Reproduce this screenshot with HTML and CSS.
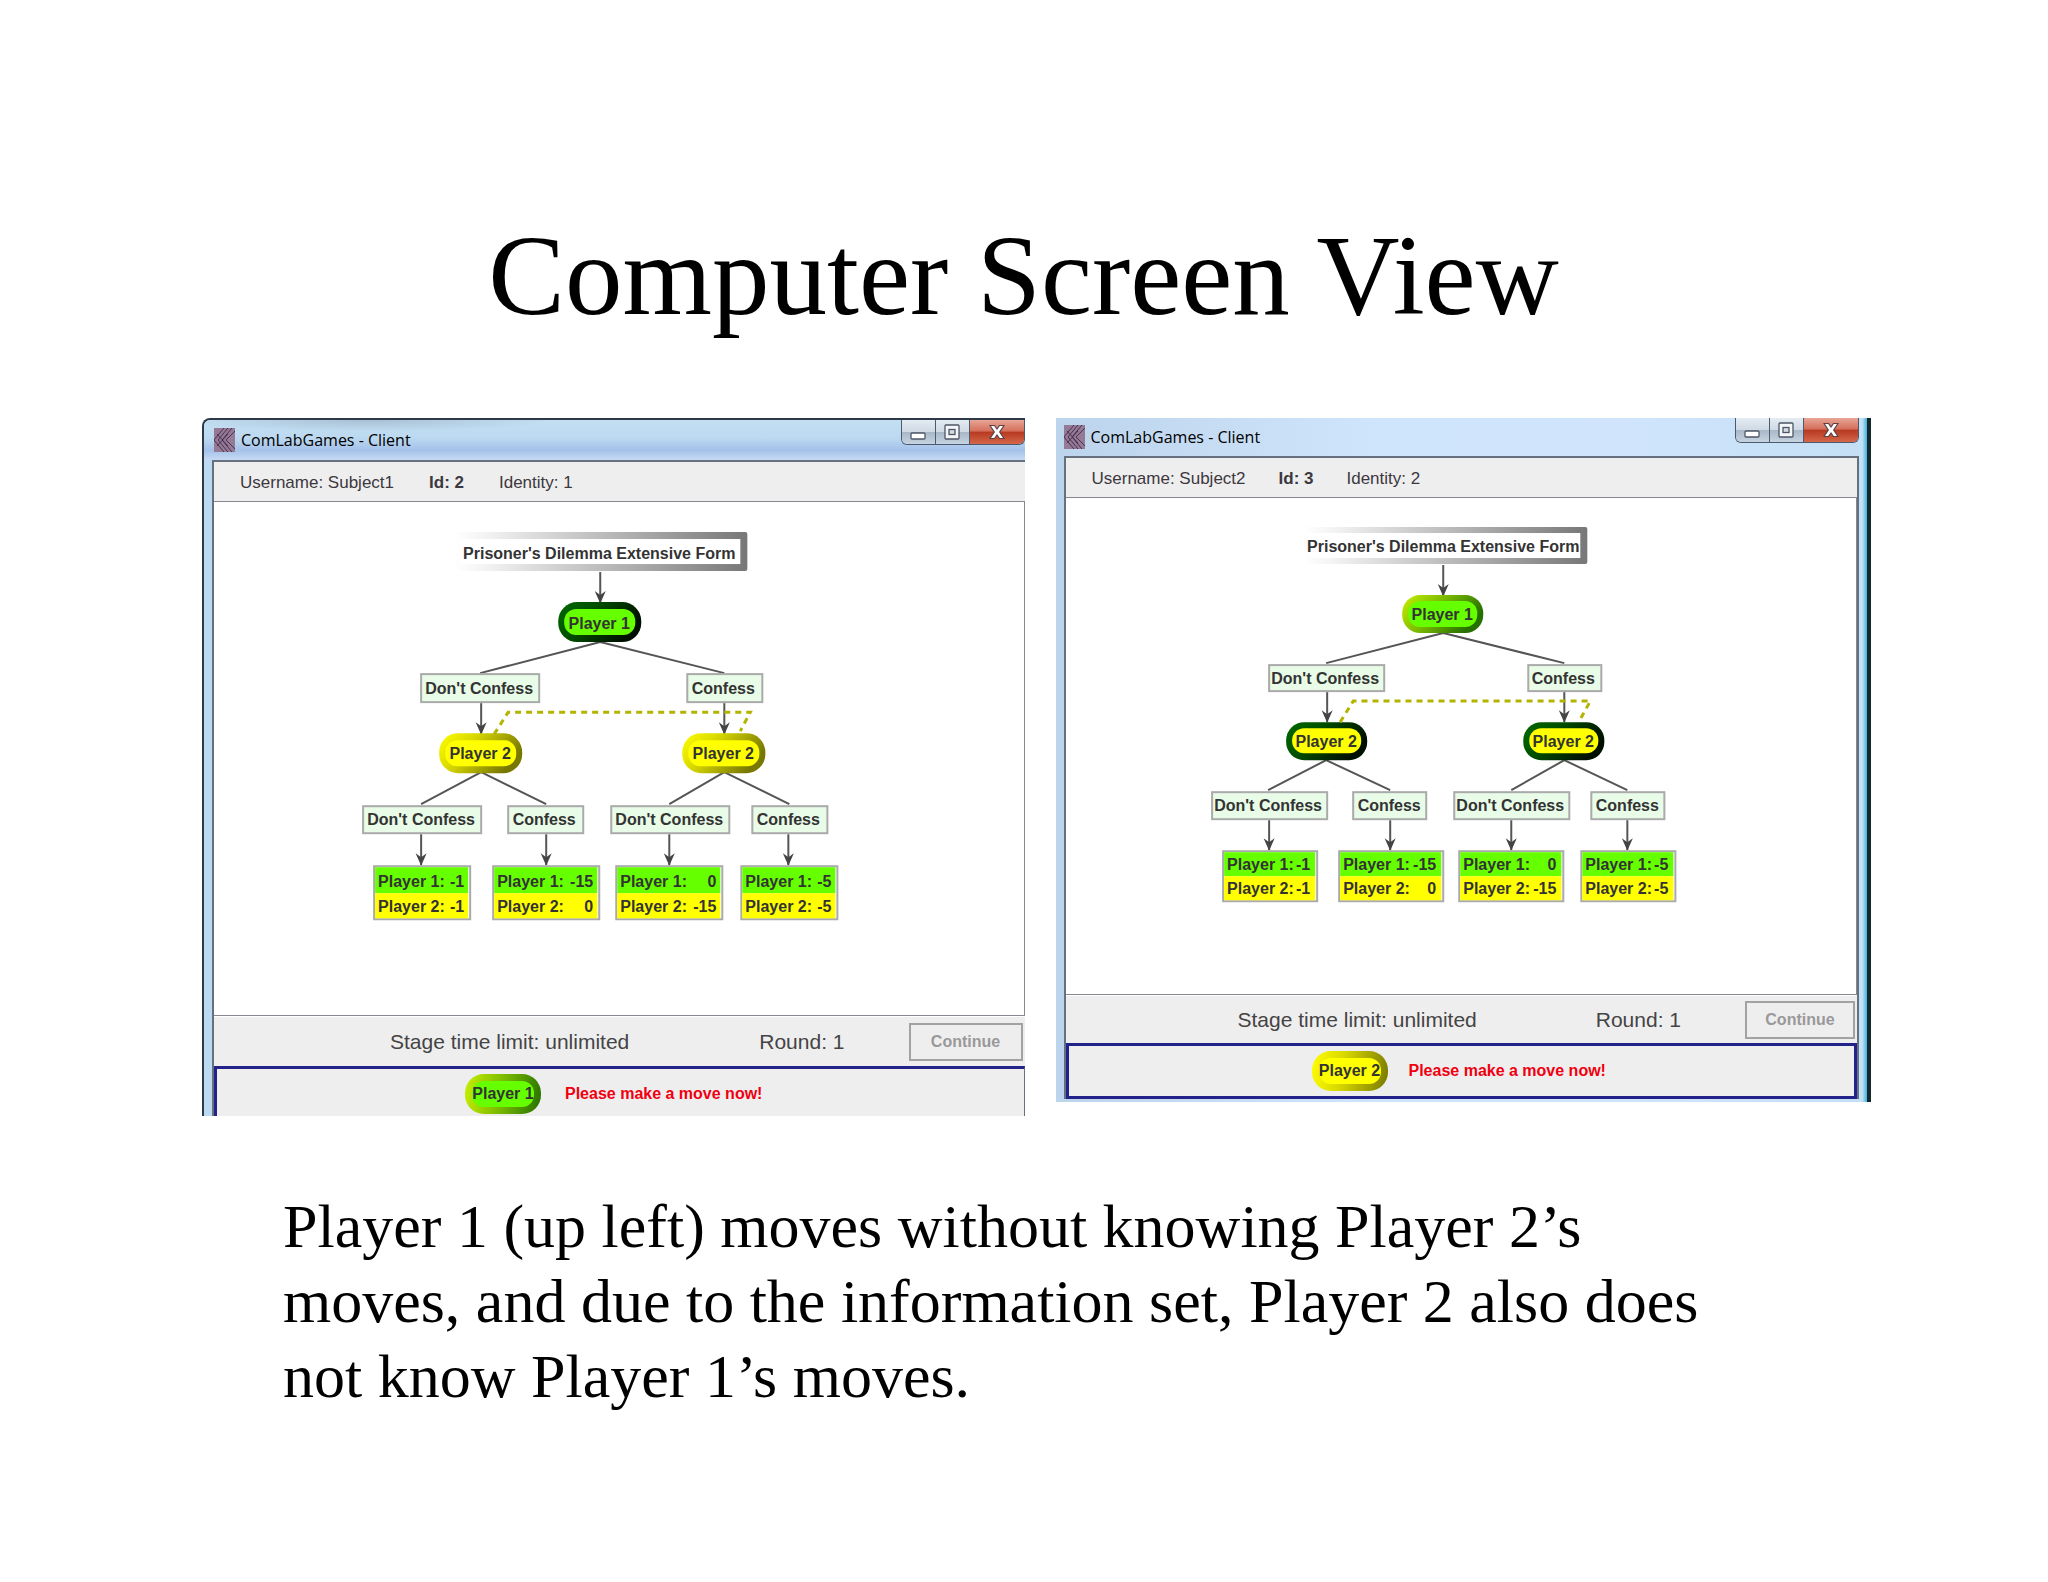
FILE: index.html
```html
<!DOCTYPE html>
<html lang="en">
<head>
    <meta charset="UTF-8">
    <meta name="viewport" content="width=device-width, initial-scale=1.0">
    <title>Computer Screen View</title>
    <link rel="stylesheet" href="styles.css">
</head>
<body>
    <!-- Shared gradients, arrow head and icons -->
    <svg class="defs" width="0" height="0" aria-hidden="true">
        <defs>
            <linearGradient id="grayFrame" x1="0" y1="0" x2="1" y2="0">
                <stop offset="0" stop-color="#fff"/>
                <stop offset="0.1" stop-color="#f4f4f4"/>
                <stop offset="1" stop-color="#777"/>
            </linearGradient>
            <linearGradient id="darkRim" x1="0" y1="0" x2="1" y2="0.4">
                <stop offset="0" stop-color="#006a00"/>
                <stop offset="0.4" stop-color="#005000"/>
                <stop offset="1" stop-color="#001000"/>
            </linearGradient>
            <linearGradient id="greenRim" x1="0" y1="0" x2="1" y2="0.4">
                <stop offset="0" stop-color="#c8f000"/>
                <stop offset="0.5" stop-color="#78b800"/>
                <stop offset="1" stop-color="#267000"/>
            </linearGradient>
            <linearGradient id="yellowRim" x1="0" y1="0" x2="1" y2="0.4">
                <stop offset="0" stop-color="#ffff00"/>
                <stop offset="0.4" stop-color="#d8d800"/>
                <stop offset="1" stop-color="#787800"/>
            </linearGradient>
            <marker id="arrow" viewBox="0 0 12 14" refX="6" refY="13" markerWidth="12" markerHeight="14" markerUnits="userSpaceOnUse">
                <path d="M0.5 1 L6 13.5 L11.5 1 L6 5 Z" fill="#444"/>
            </marker>
            <symbol id="appIcon" viewBox="0 0 21 24">
                <rect width="21" height="24" fill="#957a96"/>
                <path d="M10 0 L0 12 L10 24 M14 0 L4 12 L14 24 M18 0 L8 12 L18 24 M22 2 L12 12 L22 22 M3 6 L14 18 M3 18 L14 6" fill="none" stroke="#4a3052" stroke-width="1"/>
            </symbol>
            <symbol id="minIcon" viewBox="0 0 16 16">
                <rect x="1" y="9" width="14" height="6" rx="1" fill="#fff" stroke="#4d5566" stroke-width="1.3"/>
            </symbol>
            <symbol id="maxIcon" viewBox="0 0 16 16">
                <rect x="1" y="1" width="14" height="14" rx="1" fill="#f4f6f8" stroke="#4d5566" stroke-width="1.3"/>
                <rect x="5" y="5.5" width="6" height="5" fill="#d5dbe2" stroke="#4d5566" stroke-width="1.3"/>
            </symbol>
            <symbol id="closeIcon" viewBox="0 0 16 16">
                <path d="M1 1.5 H5.5 L8 5 L10.5 1.5 H15 L10.7 8 L15 14.5 H10.5 L8 11 L5.5 14.5 H1 L5.3 8 Z" fill="#fff" stroke="#5a4248" stroke-width="1.2"/>
            </symbol>
        </defs>
    </svg>

    <main class="slide">
        <h1>Computer Screen View</h1>

        <div class="screens">
            <section class="window window-cut">
                <header class="titlebar">
                    <svg class="app-icon" aria-hidden="true"><use href="#appIcon"/></svg>
                    <span class="window-title">ComLabGames - Client</span>
                    <div class="caption-buttons">
                        <button type="button" aria-label="Minimize"><svg><use href="#minIcon"/></svg></button>
                        <button type="button" aria-label="Maximize"><svg><use href="#maxIcon"/></svg></button>
                        <button type="button" class="close" aria-label="Close"><svg><use href="#closeIcon"/></svg></button>
                    </div>
                </header>
                <div class="client">
                    <div class="infobar">
                        <span>Username: Subject1</span>
                        <strong>Id: 2</strong>
                        <span>Identity: 1</span>
                    </div>
                    <div class="canvas">
                        <svg class="tree" viewBox="214 502 809 513" role="img" aria-label="Game tree">
                            <rect x="454" y="532" width="293" height="39" rx="2" fill="url(#grayFrame)"/>
                            <rect x="460" y="539" width="280" height="25" fill="#fff"/>
                            <text x="599" y="559">Prisoner's Dilemma Extensive Form</text>

                            <g class="edges">
                                <path d="M600 642 L480 673 M600 642 L724 673"/>
                                <path d="M481 772 L421 804 M481 772 L546 804 M724 772 L669 804 M724 772 L789 804"/>
                            </g>
                            <g class="edges arrows">
                                <path d="M600 572 V603"/>
                                <path d="M481 703 V734"/>
                                <path d="M724 703 V734"/>
                                <path d="M421 834 V865"/>
                                <path d="M546 834 V865"/>
                                <path d="M669 834 V865"/>
                                <path d="M788 834 V865"/>
                            </g>

                            <g class="pill">
                                <rect x="558" y="602" width="83" height="40" rx="19" fill="url(#darkRim)"/>
                                <rect x="564" y="609" width="71" height="26" rx="12" fill="#66ff00"/>
                                <text x="599" y="629">Player 1</text>
                            </g>
                            <g class="pill">
                                <rect x="439" y="733" width="83" height="40" rx="19" fill="url(#yellowRim)"/>
                                <rect x="445" y="740" width="71" height="26" rx="12" fill="#ffff00"/>
                                <text x="480" y="759">Player 2</text>
                            </g>
                            <g class="pill">
                                <rect x="682" y="733" width="83" height="40" rx="19" fill="url(#yellowRim)"/>
                                <rect x="688" y="740" width="71" height="26" rx="12" fill="#ffff00"/>
                                <text x="723" y="759">Player 2</text>
                            </g>
                            <path class="infoset" d="M494 734 L508 712 H750 L740 731"/>

                            <g class="move">
                                <rect x="421" y="674" width="118" height="28"/>
                                <text x="479" y="694">Don't Confess</text>
                                <rect x="687" y="674" width="75" height="28"/>
                                <text x="723" y="694">Confess</text>
                                <rect x="363" y="806" width="118" height="27"/>
                                <text x="421" y="825">Don't Confess</text>
                                <rect x="508" y="806" width="75" height="27"/>
                                <text x="544" y="825">Confess</text>
                                <rect x="611" y="806" width="118" height="27"/>
                                <text x="669" y="825">Don't Confess</text>
                                <rect x="752" y="806" width="75" height="27"/>
                                <text x="788" y="825">Confess</text>
                            </g>

                            <g class="payoff">
                                <rect class="frame" x="374" y="866" width="96" height="53"/>
                                <rect class="p1" x="375" y="867" width="93" height="26"/>
                                <rect class="p2" x="375" y="893" width="93" height="25"/>
                                <text x="378" y="887">Player 1:</text><text class="num" x="464" y="887">-1</text>
                                <text x="378" y="912">Player 2:</text><text class="num" x="464" y="912">-1</text>
                            </g>
                            <g class="payoff">
                                <rect class="frame" x="493" y="866" width="106" height="53"/>
                                <rect class="p1" x="494" y="867" width="103" height="26"/>
                                <rect class="p2" x="494" y="893" width="103" height="25"/>
                                <text x="497" y="887">Player 1:</text><text class="num" x="593" y="887">-15</text>
                                <text x="497" y="912">Player 2:</text><text class="num" x="593" y="912">0</text>
                            </g>
                            <g class="payoff">
                                <rect class="frame" x="616" y="866" width="106" height="53"/>
                                <rect class="p1" x="617" y="867" width="103" height="26"/>
                                <rect class="p2" x="617" y="893" width="103" height="25"/>
                                <text x="620" y="887">Player 1:</text><text class="num" x="716" y="887">0</text>
                                <text x="620" y="912">Player 2:</text><text class="num" x="716" y="912">-15</text>
                            </g>
                            <g class="payoff">
                                <rect class="frame" x="741" y="866" width="96" height="53"/>
                                <rect class="p1" x="742" y="867" width="93" height="26"/>
                                <rect class="p2" x="742" y="893" width="93" height="25"/>
                                <text x="745" y="887">Player 1:</text><text class="num" x="831" y="887">-5</text>
                                <text x="745" y="912">Player 2:</text><text class="num" x="831" y="912">-5</text>
                            </g>
                        </svg>
                    </div>
                    <div class="stagebar">
                        <span class="stage-limit">Stage time limit: unlimited</span>
                        <span class="round">Round: 1</span>
                        <button type="button" class="continue" disabled>Continue</button>
                    </div>
                    <div class="status">
                        <span class="badge badge-green">Player 1</span>
                        <span class="prompt">Please make a move now!</span>
                    </div>
                </div>
            </section>

            <section class="window window-full">
                <header class="titlebar">
                    <svg class="app-icon" aria-hidden="true"><use href="#appIcon"/></svg>
                    <span class="window-title">ComLabGames - Client</span>
                    <div class="caption-buttons">
                        <button type="button" aria-label="Minimize"><svg><use href="#minIcon"/></svg></button>
                        <button type="button" aria-label="Maximize"><svg><use href="#maxIcon"/></svg></button>
                        <button type="button" class="close" aria-label="Close"><svg><use href="#closeIcon"/></svg></button>
                    </div>
                </header>
                <div class="client">
                    <div class="infobar">
                        <span>Username: Subject2</span>
                        <strong>Id: 3</strong>
                        <span>Identity: 2</span>
                    </div>
                    <div class="canvas">
                        <svg class="tree" viewBox="1065 498 790 496" role="img" aria-label="Game tree">
                            <rect x="1302" y="527" width="284" height="37" rx="2" fill="url(#grayFrame)"/>
                            <rect x="1308" y="533" width="271" height="25" fill="#fff"/>
                            <text x="1442" y="552">Prisoner's Dilemma Extensive Form</text>

                            <g class="edges">
                                <path d="M1442 633 L1325 663 M1442 633 L1563 663"/>
                                <path d="M1325 760 L1267 790 M1325 760 L1389 790 M1563 760 L1510 790 M1563 760 L1626 790"/>
                            </g>
                            <g class="edges arrows">
                                <path d="M1442 565 V596"/>
                                <path d="M1326 692 V722"/>
                                <path d="M1563 692 V722"/>
                                <path d="M1268 820 V850"/>
                                <path d="M1389 820 V850"/>
                                <path d="M1510 820 V850"/>
                                <path d="M1626 820 V850"/>
                            </g>

                            <g class="pill">
                                <rect x="1401" y="595" width="81" height="38" rx="18" fill="url(#greenRim)"/>
                                <rect x="1407" y="601" width="69" height="26" rx="12" fill="#66ff00"/>
                                <text x="1441" y="620">Player 1</text>
                            </g>
                            <g class="pill">
                                <rect x="1285" y="722" width="81" height="38" rx="18" fill="url(#darkRim)"/>
                                <rect x="1291" y="728" width="69" height="25" rx="12" fill="#ffff00"/>
                                <text x="1325" y="747">Player 2</text>
                            </g>
                            <g class="pill">
                                <rect x="1522" y="722" width="81" height="38" rx="18" fill="url(#darkRim)"/>
                                <rect x="1528" y="728" width="69" height="25" rx="12" fill="#ffff00"/>
                                <text x="1562" y="747">Player 2</text>
                            </g>
                            <path class="infoset" d="M1339 722 L1352 701 H1589 L1579 719"/>

                            <g class="move">
                                <rect x="1268" y="665" width="115" height="26"/>
                                <text x="1324" y="684">Don't Confess</text>
                                <rect x="1527" y="665" width="73" height="26"/>
                                <text x="1562" y="684">Confess</text>
                                <rect x="1211" y="792" width="115" height="27"/>
                                <text x="1267" y="811">Don't Confess</text>
                                <rect x="1352" y="792" width="73" height="27"/>
                                <text x="1388" y="811">Confess</text>
                                <rect x="1453" y="792" width="115" height="27"/>
                                <text x="1509" y="811">Don't Confess</text>
                                <rect x="1590" y="792" width="73" height="27"/>
                                <text x="1626" y="811">Confess</text>
                            </g>

                            <g class="payoff">
                                <rect class="frame" x="1222" y="851" width="94" height="50"/>
                                <rect class="p1" x="1223" y="852" width="91" height="24"/>
                                <rect class="p2" x="1223" y="876" width="91" height="24"/>
                                <text x="1226" y="870">Player 1:</text><text class="num" x="1309" y="870">-1</text>
                                <text x="1226" y="894">Player 2:</text><text class="num" x="1309" y="894">-1</text>
                            </g>
                            <g class="payoff">
                                <rect class="frame" x="1338" y="851" width="104" height="50"/>
                                <rect class="p1" x="1339" y="852" width="101" height="24"/>
                                <rect class="p2" x="1339" y="876" width="101" height="24"/>
                                <text x="1342" y="870">Player 1:</text><text class="num" x="1435" y="870">-15</text>
                                <text x="1342" y="894">Player 2:</text><text class="num" x="1435" y="894">0</text>
                            </g>
                            <g class="payoff">
                                <rect class="frame" x="1458" y="851" width="104" height="50"/>
                                <rect class="p1" x="1459" y="852" width="101" height="24"/>
                                <rect class="p2" x="1459" y="876" width="101" height="24"/>
                                <text x="1462" y="870">Player 1:</text><text class="num" x="1555" y="870">0</text>
                                <text x="1462" y="894">Player 2:</text><text class="num" x="1555" y="894">-15</text>
                            </g>
                            <g class="payoff">
                                <rect class="frame" x="1580" y="851" width="94" height="50"/>
                                <rect class="p1" x="1581" y="852" width="91" height="24"/>
                                <rect class="p2" x="1581" y="876" width="91" height="24"/>
                                <text x="1584" y="870">Player 1:</text><text class="num" x="1667" y="870">-5</text>
                                <text x="1584" y="894">Player 2:</text><text class="num" x="1667" y="894">-5</text>
                            </g>
                        </svg>
                    </div>
                    <div class="stagebar">
                        <span class="stage-limit">Stage time limit: unlimited</span>
                        <span class="round">Round: 1</span>
                        <button type="button" class="continue" disabled>Continue</button>
                    </div>
                    <div class="status">
                        <span class="badge badge-yellow">Player 2</span>
                        <span class="prompt">Please make a move now!</span>
                    </div>
                </div>
            </section>
        </div>

        <p class="caption">Player 1 (up left) moves without knowing Player 2’s moves, and due to the information set, Player 2 also does not know Player 1’s moves.</p>
    </main>
</body>
</html>
```
FILE: styles.css
```css
* {
    margin: 0;
    padding: 0;
    box-sizing: border-box;
}

body {
    background: #fff;
    color: #000;
    font-family: "Liberation Sans", Arial, sans-serif;
}

.defs {
    position: absolute;
}

.slide {
    padding: 210px 177px 60px 202px;
}

h1 {
    font-family: "Liberation Serif", "Times New Roman", serif;
    font-size: 115px;
    font-weight: normal;
    line-height: 132px;
    text-align: center;
    padding-right: 26px;
    margin-bottom: 76px;
}

.screens {
    display: grid;
    grid-template-columns: 822fr 815fr;
    gap: 31px;
    align-items: start;
}

/* Windows */
.window {
    display: flex;
    flex-direction: column;
}

.window-cut {
    border-top: 2px solid #2e3a48;
    border-left: 2px solid #2e3a48;
    border-top-left-radius: 8px;
    padding-left: 8px;
    background: #bcd9f2;
    overflow: hidden;
}

.window-full {
    border-right: 4px solid #14282c;
    padding: 0 8px 3px 8px;
    background:
        linear-gradient(90deg, #c4e2f6 40%, #3fb4de) right / 8px 100% no-repeat,
        linear-gradient(90deg, #bcd4ec, #cfe5fb 40%, #d0e5fb 70%, #c4dff5);
}

.titlebar {
    display: flex;
    align-items: center;
    height: 40px;
}

.window-cut .titlebar {
    background:
        radial-gradient(ellipse at 20% 0, rgba(130, 145, 165, 0.4), transparent 20%),
        linear-gradient(180deg, #c3dff3 0%, #bcd9f0 45%, #a5c1ea 75%, #c6daf2 100%);
    margin-left: -8px;
    padding-left: 10px;
}

.window-full .titlebar {
    height: 38px;
}

.app-icon {
    width: 21px;
    height: 24px;
}

.window-title {
    font-family: "Open Sans", "Noto Sans", sans-serif;
    font-size: 16px;
    margin-left: 6px;
}

.caption-buttons {
    display: flex;
    align-self: flex-start;
    margin-left: auto;
    height: 25px;
    border: 1px solid #4b5a6c;
    border-top: none;
    border-radius: 0 0 6px 6px;
    overflow: hidden;
}

.caption-buttons button {
    display: flex;
    align-items: center;
    justify-content: center;
    width: 34px;
    border: none;
    border-right: 1px solid #4b5a6c;
    background: linear-gradient(180deg, #e4ebf2 0%, #cfdae5 48%, #a9b8c8 52%, #c6d3e0 100%);
}

.caption-buttons .close {
    width: 54px;
    border-right: none;
    background: linear-gradient(180deg, #e9a596 0%, #d4705c 45%, #b83a22 52%, #d4674a 100%);
}

.caption-buttons svg {
    width: 16px;
    height: 16px;
}

.client {
    border: 2px solid #66707e;
    border-bottom: none;
    background: #efeeef;
}

.window-cut .client {
    border-right: none;
}

.infobar {
    display: flex;
    align-items: center;
    gap: 35px;
    height: 39px;
    padding: 2px 0 0 26px;
    color: #3c3840;
    font-size: 17px;
}

.window-full .infobar {
    gap: 33px;
}

.canvas {
    background: #fff;
    border: 1px solid #85898f;
    border-left: none;
}

.tree {
    display: block;
    width: 100%;
    height: auto;
}

.tree text {
    font-size: 16px;
    font-weight: bold;
    fill: #333;
    text-anchor: middle;
}

.tree .payoff text {
    text-anchor: start;
}

.tree .payoff .num {
    text-anchor: end;
}

.edges path {
    fill: none;
    stroke: #555;
    stroke-width: 2;
}

.arrows path {
    marker-end: url(#arrow);
}

.infoset {
    fill: none;
    stroke: #b4b400;
    stroke-width: 3;
    stroke-dasharray: 6 5;
}

.move rect {
    fill: #e8fce8;
    stroke: #aaa;
    stroke-width: 2;
}

.frame {
    fill: #fff;
    stroke: #aaa;
    stroke-width: 2;
}

.p1 {
    fill: #66ff00;
}

.p2 {
    fill: #ffff00;
}

.stagebar {
    display: flex;
    align-items: center;
    height: 50px;
    padding-right: 2px;
    border-top: 1px solid #fff;
    color: #444;
    font-size: 21px;
}

.window-full .stagebar {
    height: 48px;
}

.stage-limit {
    margin-left: 176px;
}

.window-full .stage-limit {
    margin-left: 172px;
}

.round {
    margin-left: auto;
}

.continue {
    width: 114px;
    height: 38px;
    margin-left: 64px;
    border: 2px solid #a2a2a4;
    background: #efeeef;
    color: #999;
    font-family: inherit;
    font-size: 16px;
    font-weight: bold;
}

.window-full .continue {
    width: 110px;
}

.status {
    display: flex;
    align-items: center;
    height: 50px;
    padding: 2px 0 0 248px;
    border: 3px solid #22228a;
    border-right: 1px solid #66707e;
    border-bottom: none;
    font-size: 16px;
    font-weight: bold;
}

.window-full .status {
    height: 56px;
    padding: 0 0 0 243px;
    border: 3px solid #22228a;
}

/* Padding box holds the fill, border box the shaded rim */
.badge {
    display: flex;
    align-items: center;
    justify-content: center;
    width: 76px;
    height: 40px;
    border: 7px solid transparent;
    border-radius: 19px;
    color: #333;
    white-space: nowrap;
}

.badge-green {
    background:
        linear-gradient(#66ff00, #66ff00) padding-box,
        linear-gradient(100deg, #c8f000, #78b800 50%, #267000) border-box;
}

.badge-yellow {
    background:
        linear-gradient(#ffff00, #ffff00) padding-box,
        linear-gradient(100deg, #ffff00, #d8d800 40%, #787800) border-box;
}

.prompt {
    margin-left: 24px;
    color: #f00010;
}

.window-full .prompt {
    margin-left: 21px;
}

.caption {
    font-family: "Liberation Serif", "Times New Roman", serif;
    font-size: 62px;
    line-height: 75px;
    margin-top: 73px;
    padding: 0 140px 0 81px;
}
```
